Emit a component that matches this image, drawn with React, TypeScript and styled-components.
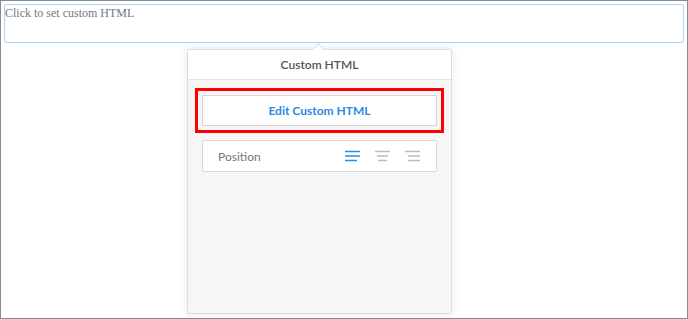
import styled, { createGlobalStyle } from "styled-components";

const GlobalStyle = createGlobalStyle`
  html, body {
    margin: 0;
    padding: 0;
    background: #ffffff;
  }
  * {
    box-sizing: border-box;
  }
`;

const Frame = styled.div`
  position: relative;
  height: 319px;
  border: 1px solid #8a8a8a;
  padding: 3px;
`;

const HtmlField = styled.div`
  height: 39px;
  border: 1px solid #a3d5fd;
  border-radius: 3px;
  padding: 1px 0 0 0;
  font-family: "Liberation Serif", "Times New Roman", serif;
  font-size: 12px;
  color: #777777;
  cursor: text;
`;

const Popover = styled.div`
  position: absolute;
  left: 186px;
  top: 48px;
  width: 265px;
  height: 265px;
  background: #f6f6f6;
  border: 1px solid #dddddd;
  border-radius: 2px;
  box-shadow: 0 0 8px rgba(0, 0, 0, 0.1);
  display: flex;
  flex-direction: column;
  font-family: Lato, "Open Sans", "Liberation Sans", sans-serif;
  font-size: 12px;
`;

const Arrow = styled.div`
  position: absolute;
  top: -5px;
  left: 126px;
  width: 9px;
  height: 9px;
  background: #ffffff;
  border-top: 1px solid #dddddd;
  border-left: 1px solid #dddddd;
  transform: rotate(45deg);
`;

const Header = styled.div`
  position: relative;
  height: 30px;
  background: #ffffff;
  border-bottom: 1px solid #e2e2e2;
  display: flex;
  align-items: center;
  justify-content: center;
  font-weight: 600;
  color: #555555;
`;

const Body = styled.div`
  flex: 1;
  padding: 15px 14px;
  display: flex;
  flex-direction: column;
  gap: 14px;
`;

const EditButton = styled.button`
  height: 31px;
  width: 100%;
  background: #ffffff;
  border: 1px solid #d6d6d6;
  border-radius: 0;
  outline: 3px solid #ff0000;
  outline-offset: 4px;
  font-family: inherit;
  font-size: 12px;
  font-weight: 700;
  color: #2b8ae2;
  cursor: pointer;
`;

const Row = styled.div`
  height: 32px;
  background: #ffffff;
  border: 1px solid #d6d6d6;
  border-radius: 2px;
  display: flex;
  align-items: center;
  padding: 0 15px;
`;

const Label = styled.span`
  flex: 1;
  color: #777777;
`;

const Aligns = styled.div`
  display: flex;
  gap: 14px;
`;

const AlignIcon = styled.svg<{ $active: boolean }>`
  display: block;
  stroke: ${(p) => (p.$active ? "#2b8ae2" : "#bdbdbd")};
  stroke-width: 1.5;
`;

type Align = "left" | "center" | "right";

const lines: Record<Align, [number, number][]> = {
  left: [
    [0, 15],
    [0, 15],
    [0, 12],
  ],
  center: [
    [0, 15],
    [2, 13],
    [3, 12],
  ],
  right: [
    [0, 15],
    [3, 15],
    [3, 15],
  ],
};

function AlignGlyph({ kind, active }: { kind: Align; active: boolean }) {
  return (
    <AlignIcon $active={active} width="16" height="12" viewBox="0 0 16 12">
      {lines[kind].map(([x1, x2], i) => (
        <line key={i} x1={x1} x2={x2} y1={1.5 + i * 4.5} y2={1.5 + i * 4.5} />
      ))}
    </AlignIcon>
  );
}

export default function App() {
  return (
    <>
      <GlobalStyle />
      <Frame>
        <HtmlField>Click to set custom HTML</HtmlField>
        <Popover>
          <Arrow />
          <Header>Custom HTML</Header>
          <Body>
            <EditButton>Edit Custom HTML</EditButton>
            <Row>
              <Label>Position</Label>
              <Aligns>
                <AlignGlyph kind="left" active />
                <AlignGlyph kind="center" active={false} />
                <AlignGlyph kind="right" active={false} />
              </Aligns>
            </Row>
          </Body>
        </Popover>
      </Frame>
    </>
  );
}
